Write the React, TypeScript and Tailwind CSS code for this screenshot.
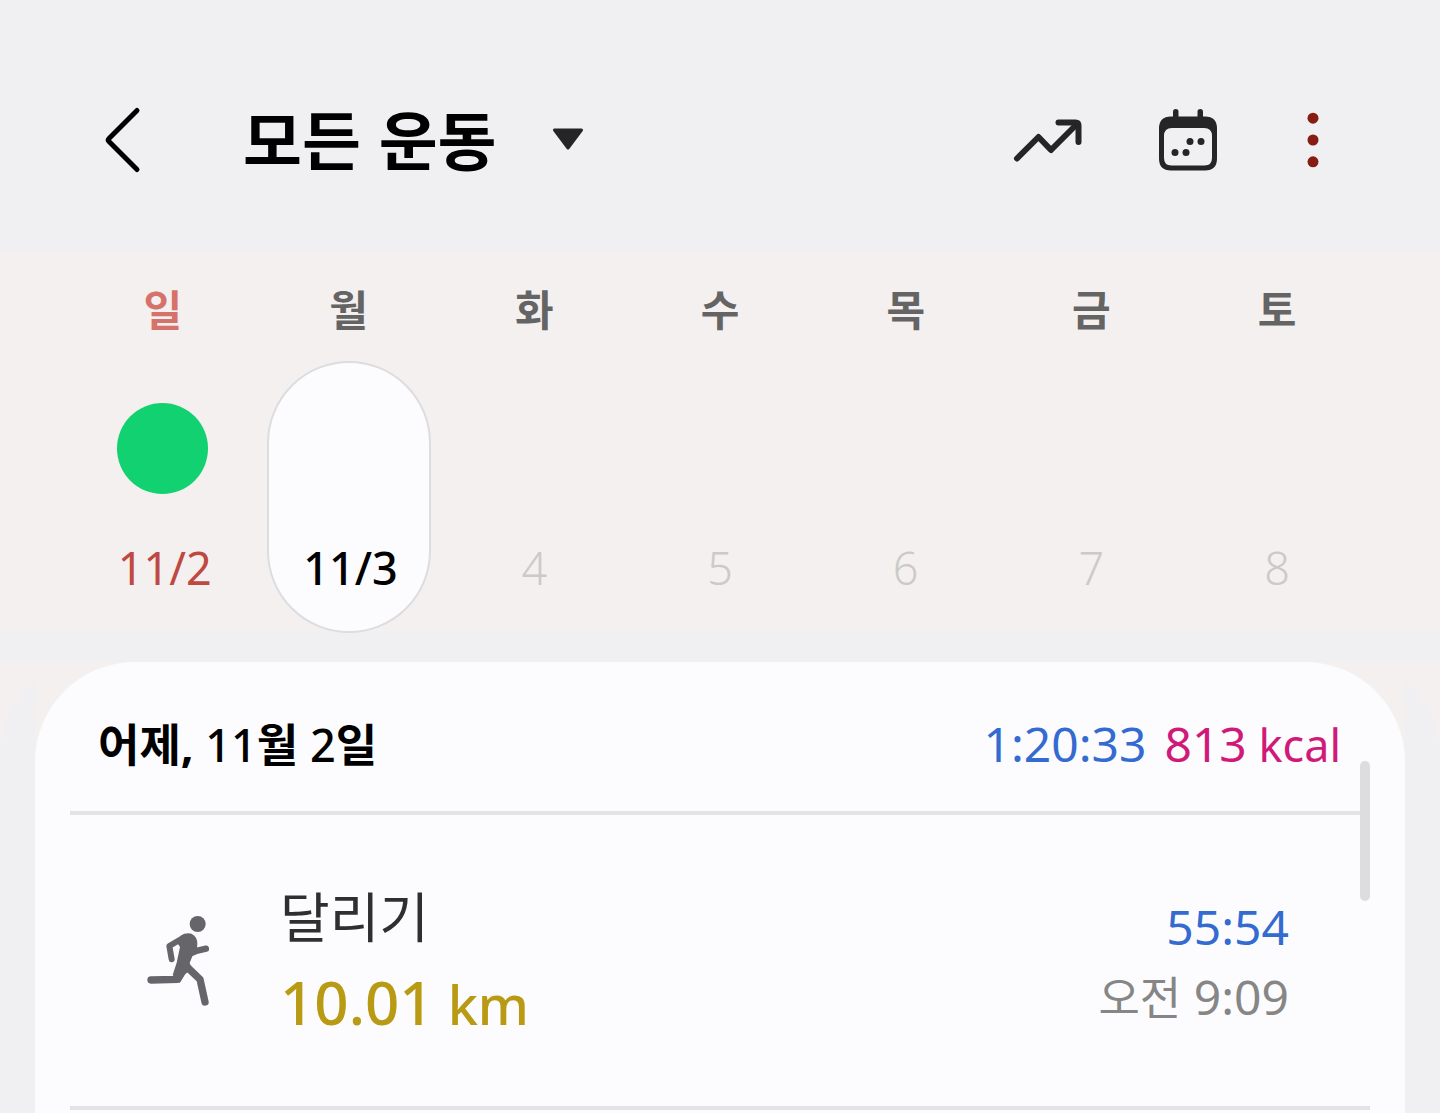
import React from 'react';

const hangul = "font-['Noto_Sans_CJK_KR',sans-serif]";
const mixed = "font-['Noto_Sans','Noto_Sans_CJK_KR',sans-serif]";

type Day = { name: string; date: string; nameColor: string; dateStyle: string; done?: boolean; selected?: boolean };

const gray = 'text-[#646464]';
const faded = 'text-[#cbcac9] font-light';

const days: Day[] = [
  { name: '일', date: '11/2', nameColor: 'text-[#d6726c]', dateStyle: 'text-[#bf4840] pl-1', done: true },
  { name: '월', date: '11/3', nameColor: gray, dateStyle: 'text-black font-medium pl-1', selected: true },
  { name: '화', date: '4', nameColor: gray, dateStyle: faded },
  { name: '수', date: '5', nameColor: gray, dateStyle: faded },
  { name: '목', date: '6', nameColor: gray, dateStyle: faded },
  { name: '금', date: '7', nameColor: gray, dateStyle: faded },
  { name: '토', date: '8', nameColor: gray, dateStyle: faded },
];

function BackIcon() {
  return (
    <svg className="h-[68px] w-10" viewBox="0 0 40 68" fill="none" stroke="#000" strokeWidth="5" strokeLinecap="round" strokeLinejoin="round" aria-hidden="true">
      <path d="M34 4.5 6 32.5Q4.5 34 6 35.5L34 63.5" />
    </svg>
  );
}

function TrendIcon() {
  return (
    <svg className="h-12 w-[72px]" viewBox="0 0 72 48" fill="none" stroke="#252527" strokeWidth="6" strokeLinecap="round" strokeLinejoin="round" aria-hidden="true">
      <path d="M6 42.5 27.5 21 40 34 66 8" />
      <path d="M47.5 6.5H64.5Q67.5 6.5 67.5 9.5V26" />
    </svg>
  );
}

function CalendarIcon() {
  return (
    <svg className="h-16 w-[60px]" viewBox="0 0 60 64" fill="#252527" aria-hidden="true">
      <path fillRule="evenodd" d="M13 8.500H47Q59 8.500 59 20.500V50.500Q59 62.500 47 62.500H13Q1 62.500 1 50.500V20.500Q1 8.500 13 8.500ZM14 20Q6 20 6 28V50Q6 57.500 13.500 57.500H46.500Q54 57.500 54 50V28Q54 20 46 20Z" />
      <rect x="15" y="1" width="5.500" height="12" rx="2.750" />
      <rect x="39.500" y="1" width="5.500" height="12" rx="2.750" />
      <circle cx="32" cy="33.500" r="3.500" />
      <circle cx="43" cy="33.500" r="3.500" />
      <circle cx="17" cy="44.500" r="3.500" />
      <circle cx="28" cy="44.500" r="3.500" />
    </svg>
  );
}

function MoreIcon() {
  return (
    <svg className="h-14 w-3" viewBox="0 0 12 56" fill="#861c12" aria-hidden="true">
      <circle cx="6" cy="6.200" r="5.500" />
      <circle cx="6" cy="28" r="5.500" />
      <circle cx="6" cy="49.800" r="5.500" />
    </svg>
  );
}

function RunnerIcon() {
  return (
    <svg className="h-[90px] w-[62px] shrink-0" viewBox="21 25 186 270" fill="#66656a" stroke="#66656a" strokeLinecap="round" strokeLinejoin="round" role="img" aria-label="달리기">
      <circle cx="173" cy="49" r="24" stroke="none" />
      <path stroke="none" d="M122 84Q148 70 163 84Q175 95 171 121L172 138L157 146L149 166L156 184L136 199L119 226L98 202L110 165L120 118L112 106Z" />
      <path fill="none" strokeWidth="18" d="M134 88 88 115 95 155" />
      <path fill="none" strokeWidth="19" d="M160 132 198 123" />
      <path fill="none" strokeWidth="22" d="M33 217 113 215 132 180" />
      <path fill="none" strokeWidth="22" d="M138 175 180 215 195 283" />
    </svg>
  );
}

export default function App() {
  return (
    <div lang="ko" className={`flex min-h-screen w-full flex-col bg-[#f0f0f2] text-black ${mixed}`}>
      <header className="flex h-[253px] items-center pt-[27px] pr-[121px] pl-[103px]">
        <button type="button" aria-label="뒤로" className="shrink-0">
          <BackIcon />
        </button>
        <div className="relative ml-[100px]">
          <select aria-label="운동 종류" className={`h-24 cursor-pointer appearance-none bg-transparent pr-[90px] pb-1.5 text-[64px] leading-[90px] font-bold ${hangul}`}>
            <option>모든 운동</option>
          </select>
          <svg className="pointer-events-none absolute top-[35px] right-0 h-6 w-8" viewBox="0 0 32 24" fill="#252527" stroke="#252527" strokeWidth="3" strokeLinejoin="round" aria-hidden="true">
            <path d="M2.500 3H29.500L16 21Z" />
          </svg>
        </div>
        <div className="ml-auto flex items-center">
          <button type="button" aria-label="추세"><TrendIcon /></button>
          <button type="button" aria-label="달력" className="ml-[75px]"><CalendarIcon /></button>
          <button type="button" aria-label="더보기" className="ml-[89px]"><MoreIcon /></button>
        </div>
      </header>

      <section aria-label="주간" className="grid grid-cols-7 bg-[#f4f0ef] px-[70px] pt-[31px]">
        {days.map((d) => (
          <div key={d.name} className="flex flex-col items-center">
            <span className={`h-12 text-[42px] leading-[48px] font-bold ${hangul} ${d.nameColor}`}>{d.name}</span>
            <button
              type="button"
              aria-pressed={!!d.selected}
              className={`mt-[29px] -mb-0.5 flex h-[272px] w-[164px] flex-col items-center rounded-full border-2 pt-10 ${d.selected ? 'border-[#dddde0] bg-[#fcfcfe]' : 'border-transparent'}`}
            >
              <span className={`size-[91px] rounded-full ${d.done ? 'bg-[#12d170]' : ''}`} />
              <span className={`mt-11 text-[45px] leading-[60px] ${d.dateStyle}`}>{d.date}</span>
            </button>
          </div>
        ))}
      </section>

      <main className="mt-[31px] flex flex-1 flex-col bg-[#f4f0ef]">
        <div className="flex flex-1 flex-col rounded-t-[90px] bg-[#f0f0f2] px-[35px]">
          <div className="flex flex-1 flex-col bg-[#f4f0ef]">
            <div className="relative flex-1 rounded-t-[100px] bg-[#fcfcfe] px-[35px]">
              <div className="flex h-[153px] items-center justify-between border-b-4 border-[#e3e3e5] pt-4 pr-[29px] pl-7">
                <h2 className="text-[45px] leading-[60px] font-bold">
                  어제, <span className="font-medium">11</span>월 <span className="font-medium">2</span>일
                </h2>
                <p className="flex gap-[18px] text-[48px] leading-[60px]">
                  <span className="text-[#346bd0]">1:20:33</span>
                  <span className="text-[#d01a7a]">813<span className="text-[45px]"> kcal</span></span>
                </p>
              </div>
              <div className="flex h-[295px] items-center border-b-4 border-[#e3e3e5] pr-[81px] pl-[77px]">
                <RunnerIcon />
                <div className="ml-[71px]">
                  <h3 className={`text-[54px] leading-[84px] text-[#2f2f2f] ${hangul}`}>달리기</h3>
                  <p className="text-[60px] leading-[90px] font-medium text-[#b99a14]">10.01<span className="text-[54px]"> km</span></p>
                </div>
                <div className="ml-auto pt-1 text-right text-[48px] leading-[70px]">
                  <p className="text-[#346bd0]">55:54</p>
                  <p className="text-[#868686]"><span className="text-[45px]">오전</span> 9:09</p>
                </div>
              </div>
              <div aria-hidden="true" className="absolute top-[99px] right-[35px] h-[140px] w-2.5 rounded-full bg-[#dddde0]" />
            </div>
          </div>
        </div>
      </main>
    </div>
  );
}
